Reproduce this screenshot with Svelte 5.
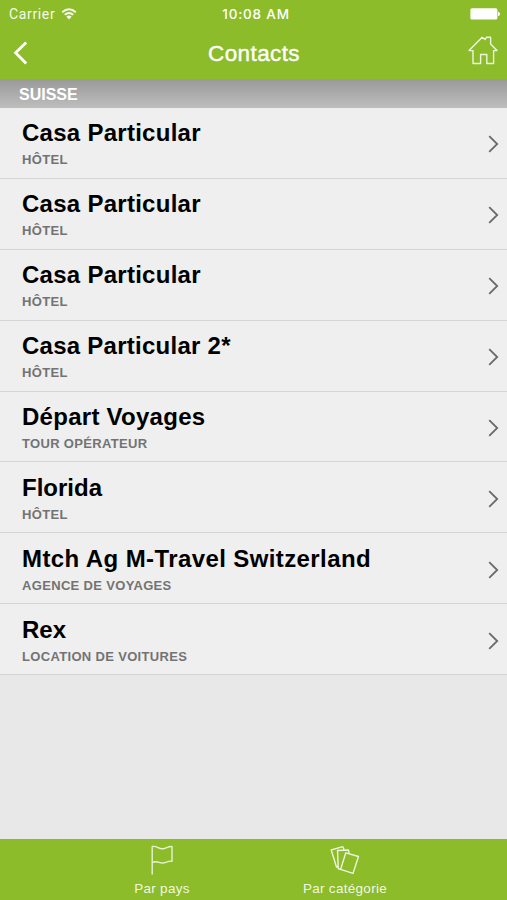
<script>
  const contacts = [
    { name: 'Casa Particular', type: 'HÔTEL', tracking: 0.27 },
    { name: 'Casa Particular', type: 'HÔTEL', tracking: 0.27 },
    { name: 'Casa Particular', type: 'HÔTEL', tracking: 0.27 },
    { name: 'Casa Particular 2*', type: 'HÔTEL', tracking: 0.26 },
    { name: 'Départ Voyages', type: 'TOUR OPÉRATEUR', tracking: 0.27 },
    { name: 'Florida', type: 'HÔTEL', tracking: 0 },
    { name: 'Mtch Ag M-Travel Switzerland', type: 'AGENCE DE VOYAGES', tracking: 0.4 },
    { name: 'Rex', type: 'LOCATION DE VOITURES', tracking: 0 }
  ];
</script>

<div class="app">
  <header>
    <div class="status">
      <div class="carrier">
        <span>Carrier</span>
        <svg width="16" height="12" viewBox="0 0 16 12" fill="none" stroke="#fff" stroke-width="1.9">
          <path d="M1.2 4.2Q8-1.8 14.8 4.2" />
          <path d="M3.7 6.8Q8 3.1 12.3 6.8" />
          <path d="M5.3 8.6Q8 6.4 10.7 8.6L8 11.4Z" fill="#fff" stroke="none" />
        </svg>
      </div>
      <time>10:08 AM</time>
      <svg class="battery" width="30" height="12" viewBox="0 0 30 12" fill="#fff">
        <rect x="0.4" y="0.3" width="27" height="11.2" rx="1.6" />
        <path d="M28 3.8Q30 4.2 30 6T28 8Z" />
      </svg>
    </div>
    <nav>
      <svg class="back" width="16" height="26" viewBox="0 0 16 26" fill="none" stroke="#fff" stroke-width="2.8">
        <path d="M14.2 2.4L3.6 12.8L14.2 23.4" />
      </svg>
      <h1>Contacts</h1>
      <svg class="home" width="30" height="30" viewBox="0 0 30 30" fill="none" stroke="#fff" stroke-opacity=".85" stroke-width="1.4" stroke-linejoin="round">
        <path d="M1 14.6L14.2 1.2L17 3.5L18.6 1.2H22.6V7.9L29 14.6H25.6V27.5H18.8V18.5H12.6V27.5H5V14.6Z" />
      </svg>
    </nav>
  </header>

  <main>
    <h2>SUISSE</h2>
    <ul>
      {#each contacts as contact}
        <li>
          <div class="info">
            <span class="name" style="letter-spacing: {contact.tracking}px">{contact.name}</span>
            <span class="type">{contact.type}</span>
          </div>
          <svg width="12" height="18" viewBox="0 0 12 18" fill="none" stroke="#696969" stroke-width="1.8">
            <path d="M1.2 1.2L9.2 9L1.2 16.8" />
          </svg>
        </li>
      {/each}
    </ul>
  </main>

  <footer>
    <div class="tab">
      <svg width="24" height="30" viewBox="0 0 24 30" fill="none" stroke="#fff" stroke-opacity=".8" stroke-width="1.4" stroke-linejoin="round">
        <path d="M2.2 29.5V1.5C7 .5 9 4.5 13 3.7C17 3 18 1.2 22 1.6V16.2C18 15.5 16 18 12.5 18C9 18 7 15.5 2.2 17.5" />
      </svg>
      <span>Par pays</span>
    </div>
    <div class="tab">
      <svg width="30" height="30" viewBox="0 0 30 30" fill="none" stroke="#fff" stroke-opacity=".85" stroke-width="1.4" stroke-linejoin="round">
        <path d="M15.8 7.8L28.5 11.5L23 28.4L10.6 24.4Z" />
        <path d="M10.4 24.2L8.3 23.8L7.5 5.5L18.5 5L19 8.4" />
        <path d="M8.1 21.8L6.5 22L1.2 5L12.8 1.7L14.2 4.9" />
      </svg>
      <span>Par catégorie</span>
    </div>
  </footer>
</div>

<style>
  .app {
    display: flex;
    flex-direction: column;
    width: 507px;
    height: 900px;
    overflow: hidden;
    background: #e8e8e8;
    font-family: "Liberation Sans", Arial, sans-serif;
  }
  header {
    height: 79px;
    background: #8cbc29;
    color: #fff;
  }
  .status, nav {
    display: grid;
    grid-template-columns: 1fr auto 1fr;
  }
  .status {
    height: 28px;
    align-items: center;
    padding: 0 7px 0 9px;
    box-sizing: border-box;
  }
  .carrier {
    display: flex;
    align-items: center;
    gap: 6px;
    font: 14px/28px Roboto, sans-serif;
    letter-spacing: 0.65px;
    opacity: 0.92;
  }
  time {
    font: 500 13.5px/28px Inter, sans-serif;
    letter-spacing: 0.8px;
    padding-left: 3px;
  }
  .battery { justify-self: end; }
  nav {
    height: 51px;
    align-items: center;
    padding: 0 9px 0 12px;
  }
  .back { margin-bottom: 2px; }
  .home {
    justify-self: end;
    margin-bottom: 5px;
  }
  h1 {
    margin: 1px 0 0 -2px;
    font-size: 22.5px;
    font-weight: 400;
    letter-spacing: 0.4px;
    -webkit-text-stroke: 0.4px #fff;
  }
  main {
    flex: 1;
    min-height: 0;
  }
  h2 {
    margin: 0;
    height: 29px;
    padding: 1px 19px 0;
    box-sizing: border-box;
    background: linear-gradient(#999, #bebebe);
    color: #fff;
    font-size: 16px;
    line-height: 29px;
  }
  ul {
    margin: 0;
    padding: 0;
    list-style: none;
  }
  li {
    display: flex;
    align-items: center;
    justify-content: space-between;
    height: 70.9px;
    padding: 0 7px 0 22px;
    box-sizing: border-box;
    background: #efefef;
    border-bottom: 1px solid #d5d5d5;
  }
  li svg { margin-top: 3px; }
  .info {
    display: flex;
    flex-direction: column;
    padding-top: 2.8px;
  }
  .name {
    color: #000;
    font-size: 24px;
    font-weight: 700;
    line-height: 28px;
    white-space: nowrap;
  }
  .type {
    margin-top: 3px;
    color: #737373;
    font-size: 13px;
    font-weight: 700;
    line-height: 19px;
    letter-spacing: 0.33px;
  }
  footer {
    display: flex;
    justify-content: center;
    height: 61px;
    background: #8cbc29;
    color: rgba(255, 255, 255, 0.9);
  }
  .tab {
    display: flex;
    flex-direction: column;
    align-items: center;
    width: 183px;
    padding-top: 6px;
    font-size: 13.5px;
    line-height: 15px;
  }
  .tab span {
    margin-top: 6px;
    letter-spacing: 0.3px;
  }
</style>
